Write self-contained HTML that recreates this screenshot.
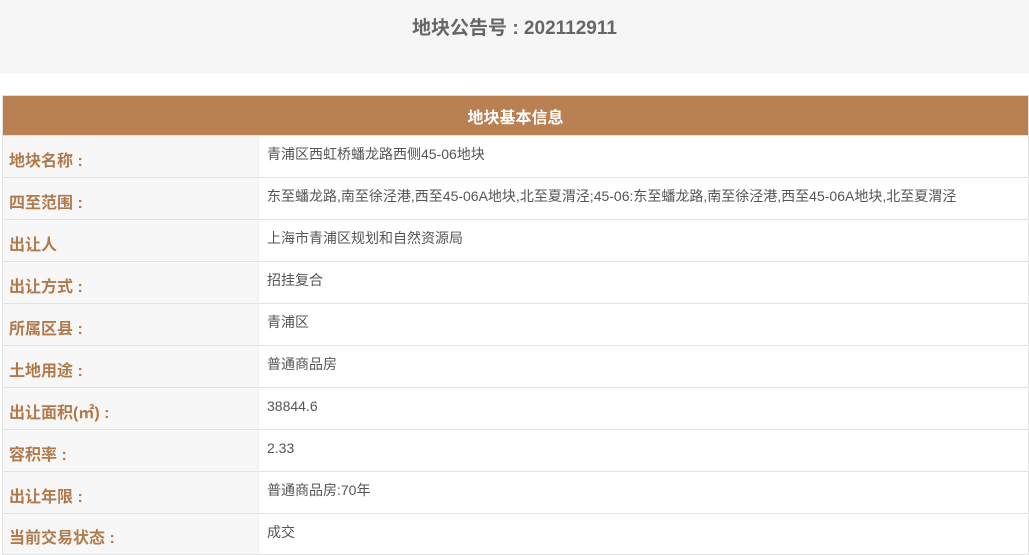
<!DOCTYPE html>
<html><head><meta charset="utf-8">
<style>
*{margin:0;padding:0;box-sizing:border-box}
body{width:1029px;height:555px;overflow:hidden;background:#fff;font-family:"Liberation Sans","Noto Sans CJK SC",sans-serif}
.top{height:73px;background:#f6f6f6;text-align:center;font-size:19px;font-weight:bold;color:#666;line-height:58px}
table{position:absolute;left:2px;top:95px;width:1027px;border-collapse:collapse}
th{height:40px;background:#b98052;color:#fff;font-size:16px;font-weight:bold;border:1px solid #e0e0e0}
td{height:42px;border-top:1px solid #e2e2e2;border-bottom:1px solid #e2e2e2;vertical-align:middle}
td.l{width:256px;background:#f7f7f7;color:#b07a4c;font-weight:bold;font-size:16px;padding-left:6px;padding-top:4px;border-left:1px solid #e2e2e2}
td.v{background:#fff;color:#555;font-size:14px;padding-left:8px;padding-bottom:5px;border-left:1px solid #f0f0f0;border-right:1px solid #e2e2e2}
tr:last-child td{height:41px}
</style></head><body>
<div class="top">地块公告号 : 202112911</div>
<table>
<tr><th colspan="2">地块基本信息</th></tr>
<tr><td class="l">地块名称 :</td><td class="v">青浦区西虹桥蟠龙路西侧45-06地块</td></tr>
<tr><td class="l">四至范围 :</td><td class="v">东至蟠龙路,南至徐泾港,西至45-06A地块,北至夏渭泾;45-06:东至蟠龙路,南至徐泾港,西至45-06A地块,北至夏渭泾</td></tr>
<tr><td class="l">出让人</td><td class="v">上海市青浦区规划和自然资源局</td></tr>
<tr><td class="l">出让方式 :</td><td class="v">招挂复合</td></tr>
<tr><td class="l">所属区县 :</td><td class="v">青浦区</td></tr>
<tr><td class="l">土地用途 :</td><td class="v">普通商品房</td></tr>
<tr><td class="l">出让面积(㎡) :</td><td class="v">38844.6</td></tr>
<tr><td class="l">容积率 :</td><td class="v">2.33</td></tr>
<tr><td class="l">出让年限 :</td><td class="v">普通商品房:70年</td></tr>
<tr><td class="l">当前交易状态 :</td><td class="v">成交</td></tr>
</table>
</body></html>
